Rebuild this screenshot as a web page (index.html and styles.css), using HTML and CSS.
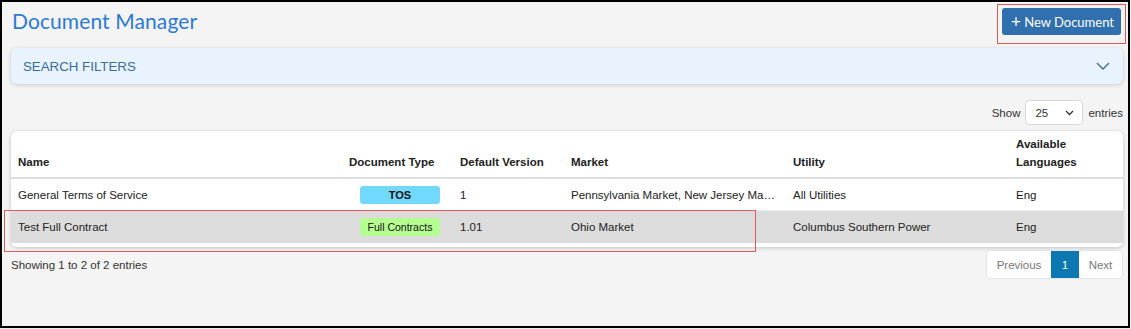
FILE: index.html
```html
<!DOCTYPE html>
<html lang="en">

<head>
    <meta charset="UTF-8">
    <meta name="viewport" content="width=device-width, initial-scale=1.0">
    <title>Document Manager</title>
    <link rel="stylesheet" href="styles.css">
</head>

<body>
    <div class="frame">
        <div class="top-bar">
            <h1 class="page-title">Document Manager</h1>
            <div class="btn-mark">
                <button class="btn-new"><span class="plus">+</span> New Document</button>
            </div>
        </div>

        <div class="filters">
            <span>SEARCH FILTERS</span>
            <svg class="chevron" width="14" height="8" viewBox="0 0 14 8">
                <path d="M1 1 L7 7 L13 1" fill="none" stroke="#3a6e9e" stroke-width="1.4" />
            </svg>
        </div>

        <div class="length-row">
            <span>Show</span>
            <div class="select">
                <span>25</span>
                <svg width="9" height="6" viewBox="0 0 9 6">
                    <path d="M1 1 L4.5 4.5 L8 1" fill="none" stroke="#333" stroke-width="1.3" />
                </svg>
            </div>
            <span>entries</span>
        </div>

        <div class="card">
            <table class="doc-table">
                <thead>
                    <tr>
                        <th class="col-name">Name</th>
                        <th class="col-type">Document Type</th>
                        <th class="col-ver">Default Version</th>
                        <th class="col-market">Market</th>
                        <th class="col-util">Utility</th>
                        <th class="col-lang">Available<br>Languages</th>
                    </tr>
                </thead>
                <tbody>
                    <tr>
                        <td>General Terms of Service</td>
                        <td><span class="badge badge-tos">TOS</span></td>
                        <td>1</td>
                        <td>Pennsylvania Market, New Jersey Ma…</td>
                        <td>All Utilities</td>
                        <td>Eng</td>
                    </tr>
                    <tr class="shaded">
                        <td>Test Full Contract</td>
                        <td><span class="badge badge-full">Full Contracts</span></td>
                        <td>1.01</td>
                        <td>Ohio Market</td>
                        <td>Columbus Southern Power</td>
                        <td>Eng</td>
                    </tr>
                </tbody>
            </table>
        </div>

        <div class="table-footer">
            <span class="info">Showing 1 to 2 of 2 entries</span>
            <div class="pager">
                <span class="page-link prev">Previous</span>
                <span class="page-link active">1</span>
                <span class="page-link next">Next</span>
            </div>
        </div>

        <!-- annotation box around the second row -->
        <div class="row-mark"></div>
    </div>
</body>

</html>
```

FILE: styles.css
```css
body {
    margin: 0;
    background-color: #ececec;
    font-family: "Liberation Sans", Arial, sans-serif;
    color: #222;
}

.frame {
    position: relative;
    box-sizing: border-box;
    width: 1130px;
    height: 328px;
    border: 2px solid #000;
    background-color: #f4f4f4;
    padding: 0 5px 0 9px;
}

.top-bar {
    display: flex;
    justify-content: space-between;
    align-items: flex-start;
    padding-top: 2px;
    height: 40px;
}

.page-title {
    margin: 4px 0 0 1px;
    font-family: Lato, "Open Sans", sans-serif;
    font-weight: 400;
    font-size: 21px;
    color: #2d7bd5;
    letter-spacing: 0.1px;
}

.btn-mark {
    box-sizing: border-box;
    height: 40px;
    width: 129px;
    border: 1px solid #e05a5a;
    padding: 3px 0 0 4px;
    margin-right: -3px;
}

.btn-new {
    width: 119px;
    height: 27px;
    border: none;
    border-radius: 3px;
    background-color: #3170ae;
    color: #fff;
    font-family: Lato, "Open Sans", sans-serif;
    font-size: 13px;
    padding: 0 0 0 2px;
}

.btn-new .plus {
    font-size: 17px;
    line-height: 1;
    vertical-align: -1px;
}

.filters {
    display: flex;
    justify-content: space-between;
    align-items: center;
    height: 36px;
    margin-top: 4px;
    padding: 0 13px 0 12px;
    background-color: #e8f3fd;
    border-radius: 6px;
    box-shadow: 0 1px 4px rgba(0, 0, 0, 0.18);
    font-size: 13.3px;
    color: #3a6e9e;
}

.length-row {
    display: flex;
    justify-content: flex-end;
    align-items: center;
    gap: 5px;
    margin-top: 16px;
    font-size: 11.5px;
    color: #333;
}

.select {
    box-sizing: border-box;
    width: 58px;
    height: 25px;
    display: flex;
    justify-content: space-between;
    align-items: center;
    padding: 0 8px 0 9px;
    background: #fff;
    border: 1px solid #d8d8d8;
    border-radius: 4px;
    font-size: 11.5px;
}

.card {
    margin-top: 6px;
    background: #fff;
    border-radius: 6px;
    box-shadow: 0 1px 4px rgba(0, 0, 0, 0.2);
    padding-bottom: 4px;
    overflow: hidden;
}

.doc-table {
    width: 100%;
    border-collapse: collapse;
    table-layout: fixed;
    font-size: 11.5px;
}

.doc-table th {
    text-align: left;
    font-weight: bold;
    vertical-align: bottom;
    padding: 4px 8px 6px;
    line-height: 18px;
    border-bottom: 2px solid #dedede;
    color: #222;
}

.doc-table td {
    padding: 0 8px;
    height: 31px;
    border-bottom: 1px solid #eee;
    white-space: nowrap;
    overflow: hidden;
}

.doc-table .col-name {
    width: 315px;
    padding-left: 7px;
}

.doc-table td:first-child {
    padding-left: 7px;
}

.col-type { width: 95px; }
.col-ver { width: 95px; }
.col-market { width: 206px; }
.col-util { width: 207px; }

.doc-table tr.shaded td {
    background-color: #dcdcdc;
    border-bottom: none;
    height: 32px;
}

.badge {
    display: inline-block;
    width: 80px;
    height: 18px;
    line-height: 18px;
    margin-left: 11px;
    text-align: center;
    border-radius: 3px;
    font-size: 11px;
    color: #111;
}

.badge-tos {
    background-color: #70d9fc;
    font-weight: bold;
}

.badge-full {
    background-color: #b5fe92;
    font-size: 10.5px;
}

.table-footer {
    display: flex;
    justify-content: space-between;
    align-items: center;
    margin-top: 3px;
    font-size: 11.5px;
}

.info {
    color: #333;
}

.pager {
    display: flex;
    height: 27px;
    background: #fff;
    border: 1px solid #e1e4e8;
    border-radius: 4px;
    overflow: hidden;
}

.page-link {
    display: flex;
    align-items: center;
    justify-content: center;
    color: #777;
}

.prev { width: 64px; }
.next { width: 43px; }

.page-link.active {
    width: 28px;
    background-color: #0b78b1;
    color: #fff;
}

.row-mark {
    position: absolute;
    left: 2px;
    top: 208px;
    width: 750px;
    height: 40px;
    border: 1px solid #e05a5a;
    pointer-events: none;
}
```
